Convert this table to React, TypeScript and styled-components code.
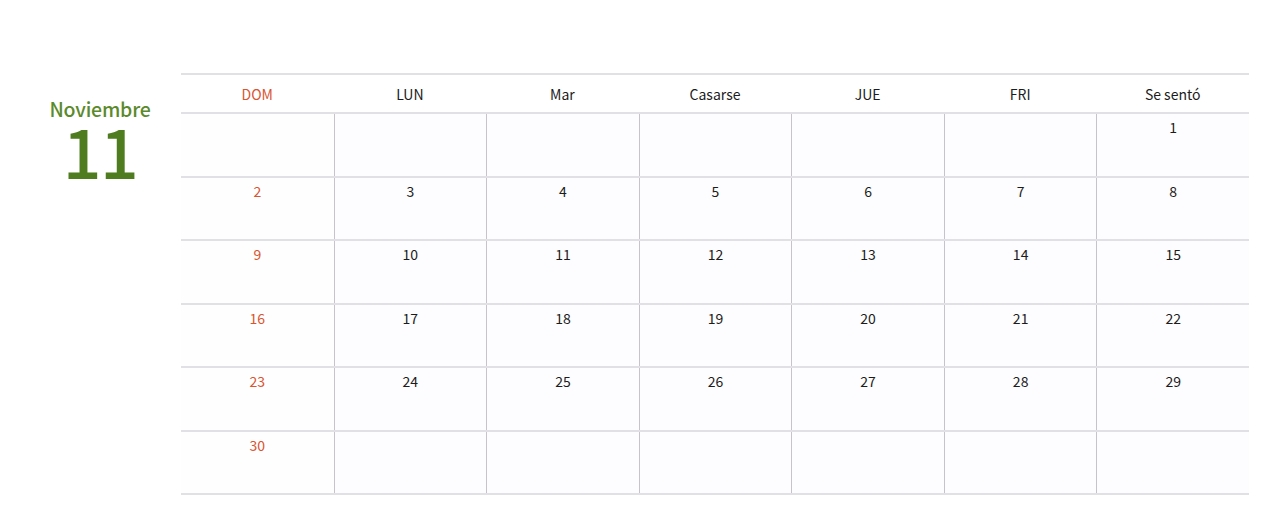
import React from 'react';
import styled, { createGlobalStyle } from 'styled-components';

const GlobalStyle = createGlobalStyle`
  body {
    margin: 0;
    background: #ffffff;
    font-family: 'Noto Sans CJK SC', 'Noto Sans', sans-serif;
  }
`;

const Page = styled.div`
  display: flex;
  width: 1280px;
  height: 522px;
`;

const Side = styled.div`
  width: 181px;
  padding-left: 19px;
  padding-top: 99px;
  box-sizing: border-box;
  display: flex;
  flex-direction: column;
  align-items: center;
`;

const MonthName = styled.div`
  font-size: 19.5px;
  line-height: 20px;
  font-weight: 500;
  color: #5b8a2b;
  letter-spacing: -0.2px;
`;

const MonthNumber = styled.div`
  font-size: 68px;
  line-height: 56px;
  margin-top: 3px;
  font-weight: 500;
  color: #4e7c1f;
  letter-spacing: -1.5px;
`;

const Calendar = styled.div`
  width: 1068px;
  margin-top: 73px;
`;

const HeaderRow = styled.div`
  display: grid;
  grid-template-columns: repeat(7, 1fr);
  height: 41px;
  box-sizing: border-box;
  border-top: 2px solid #e1e0e4;
  border-bottom: 2px solid #e1e0e4;
`;

const HeaderCell = styled.div<{ $sunday?: boolean }>`
  display: flex;
  align-items: center;
  justify-content: center;
  font-size: 14px;
  color: ${(p) => (p.$sunday ? '#d9542f' : '#1c1c1c')};
`;

const WeekRow = styled.div`
  display: grid;
  grid-template-columns: repeat(7, 1fr);
  height: 63.5px;
  box-sizing: border-box;
  border-bottom: 2px solid #e1e0e4;
`;

const DayCell = styled.div<{ $sunday?: boolean }>`
  background: ${(p) => (p.$sunday ? '#fefefe' : '#fdfcfe')};
  border-left: ${(p) => (p.$sunday ? 'none' : '1px solid #c6c3ca')};
  text-align: center;
  padding-top: 3px;
  font-size: 14px;
  line-height: 20px;
  color: ${(p) => (p.$sunday ? '#d9542f' : '#1c1c1c')};
`;

const days = ['DOM', 'LUN', 'Mar', 'Casarse', 'JUE', 'FRI', 'Se sentó'];

const weeks: (number | null)[][] = [
  [null, null, null, null, null, null, 1],
  [2, 3, 4, 5, 6, 7, 8],
  [9, 10, 11, 12, 13, 14, 15],
  [16, 17, 18, 19, 20, 21, 22],
  [23, 24, 25, 26, 27, 28, 29],
  [30, null, null, null, null, null, null],
];

export default function App() {
  return (
    <>
      <GlobalStyle />
      <Page>
        <Side>
          <MonthName>Noviembre</MonthName>
          <MonthNumber>11</MonthNumber>
        </Side>
        <Calendar>
          <HeaderRow>
            {days.map((d, i) => (
              <HeaderCell key={d} $sunday={i === 0}>
                {d}
              </HeaderCell>
            ))}
          </HeaderRow>
          {weeks.map((week, w) => (
            <WeekRow key={w}>
              {week.map((day, i) => (
                <DayCell key={i} $sunday={i === 0}>
                  {day ?? ''}
                </DayCell>
              ))}
            </WeekRow>
          ))}
        </Calendar>
      </Page>
    </>
  );
}
